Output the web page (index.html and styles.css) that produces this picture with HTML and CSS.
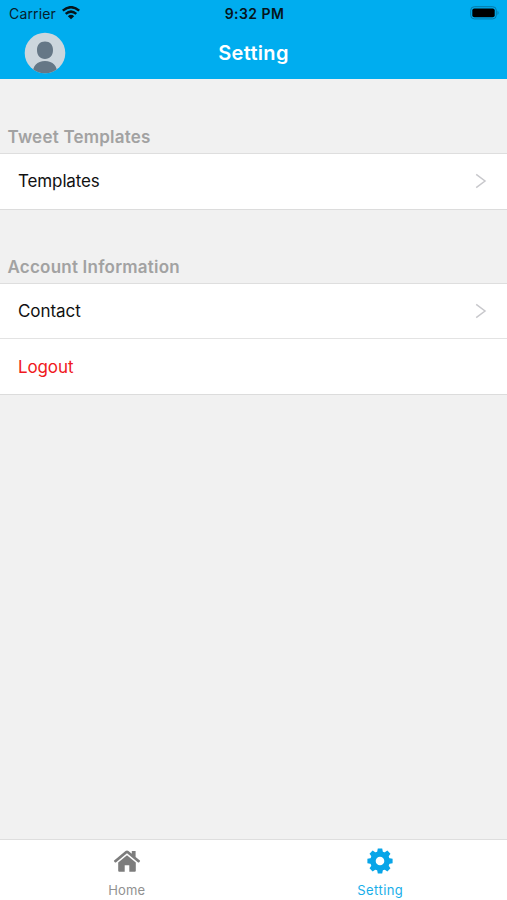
FILE: index.html
```
<!DOCTYPE html>
<html lang="en">
<head>
<meta charset="utf-8">
<title>Setting</title>
<link rel="stylesheet" href="styles.css">
</head>
<body>
<header class="header">
  <div class="status">
    <div class="carrier"><span>Carrier</span>
      <svg class="wifi" width="18" height="14" viewBox="0 0 18 14"><g fill="none" stroke="#06141b" stroke-width="2.5"><path d="M.8 4.6Q9-2.2 17.2 4.6"/><path d="M3.7 7.9Q9 3.4 14.3 7.9"/></g><path d="M5.8 10.2Q9 7.4 12.2 10.2L9 13.3z" fill="#06141b"/></svg>
    </div>
    <time class="time">9:32 PM</time>
    <svg class="battery" width="30" height="14" viewBox="0 0 30 14"><rect x=".7" y=".7" width="25.6" height="12.2" rx="3.6" fill="none" stroke="#0679a8" stroke-width="1"/><rect x="2.3" y="2.4" width="22.4" height="8.8" rx="2" fill="#000"/><path d="M27.5 4.7q2.2 2.1 0 4.2z" fill="#0679a8"/></svg>
  </div>
  <div class="nav">
    <svg class="avatar" width="42" height="42" viewBox="0 0 42 42"><defs><clipPath id="round"><circle cx="21" cy="21" r="20.3"/></clipPath></defs><g clip-path="url(#round)"><path fill="#ccd6dd" d="M0 0h42v42H0z"/><path fill="#657786" d="M21 9.5c5 0 8 3.3 8 8.4 0 5.3-3 9-8 9s-8-3.7-8-9c0-5.1 3-8.4 8-8.4zM8.7 42c0-8 4.3-13 12.3-13s12.3 5 12.3 13z"/></g></svg>
    <h1 class="title">Setting</h1>
  </div>
</header>
<main class="content">
  <h2 class="section-title tweets">Tweet Templates</h2>
  <div class="list">
    <div class="row"><span class="templates">Templates</span><svg class="chevron" width="12" height="16" viewBox="0 0 12 16"><path d="M1.2 1.3L10 8l-8.8 6.7"/></svg></div>
  </div>
  <h2 class="section-title account">Account Information</h2>
  <div class="list">
    <div class="row contact"><span>Contact</span><svg class="chevron" width="12" height="16" viewBox="0 0 12 16"><path d="M1.2 1.3L10 8l-8.8 6.7"/></svg></div>
    <div class="row logout"><span>Logout</span></div>
  </div>
</main>
<nav class="tabs">
  <div class="tab">
    <svg width="28" height="28" viewBox="0 0 28 28" fill="#7d7d7d"><path d="M14 8.2l8.8 7.4v8.2q0 1-1 1h-5.5v-6.6h-4.6v6.6H6.2q-1 0-1-1v-8.2z"/><path d="M14 3.4q.8 0 1.5.6l3.3 2.8V4.1h3.8v5.8l4.3 3.6q.4.4.1.8l-1 1.1q-.4.4-.9 0L14 6.2 2.9 15.4q-.5.4-.9 0l-1-1.1q-.3-.4.1-.8L12.5 4q.7-.6 1.5-.6z"/></svg>
    <span class="home">Home</span>
  </div>
  <div class="tab active">
    <svg width="28" height="28" viewBox="0 0 28 28"><g fill="#08a5e8"><circle cx="14" cy="14" r="9.8"/><path d="M11.8 1.4h4.4l.8 4.3v16.6l-.8 4.3h-4.4l-.8-4.3V5.7z"/><path transform="rotate(45 14 14)" d="M11.8 1.4h4.4l.8 4.3v16.6l-.8 4.3h-4.4l-.8-4.3V5.7z"/><path transform="rotate(90 14 14)" d="M11.8 1.4h4.4l.8 4.3v16.6l-.8 4.3h-4.4l-.8-4.3V5.7z"/><path transform="rotate(135 14 14)" d="M11.8 1.4h4.4l.8 4.3v16.6l-.8 4.3h-4.4l-.8-4.3V5.7z"/></g><circle cx="14" cy="14" r="4.3" fill="#fff"/></svg>
    <span class="setting">Setting</span>
  </div>
</nav>
</body>
</html>
```
FILE: styles.css
```
* { box-sizing: border-box; }
body { margin: 0; height: 900px; display: flex; flex-direction: column; overflow: hidden; background: #f1f1f1; font-family: Inter, "Liberation Sans", sans-serif; color: #111; }
svg { display: block; flex-shrink: 0; }
.header { height: 79px; background: #00adef; flex-shrink: 0; }
.status { height: 27px; display: grid; grid-template-columns: 1fr auto 1fr; align-items: center; padding: 0 7px 0 9px; }
.carrier { display: flex; align-items: center; gap: 6px; font-size: 14px; line-height: 20px; letter-spacing: .15px; color: #06202c; }
.wifi { margin-top: -2px; }
.time { font-size: 14px; font-weight: 600; letter-spacing: .45px; color: #06141b; }
.battery { justify-self: end; margin-top: -1px; }
.nav { height: 51px; display: grid; grid-template-columns: 1fr auto 1fr; align-items: center; padding: 0 24px; }
.title { margin: 0; font-size: 20px; line-height: 26px; font-weight: 600; letter-spacing: .3px; color: #fff; }
.content { flex: 1; }
.section-title { margin: 0; height: 74px; padding: 46px 7.5px 0; font-size: 17px; line-height: 24px; font-weight: 600; letter-spacing: .22px; color: #a2a2a2; }
.account { height: 73px; padding-top: 45px; }
.list { background: #fff; border-top: 1px solid #dedede; border-bottom: 1px solid #dcdcdc; }
.row { height: 55px; display: flex; align-items: center; justify-content: space-between; padding: 0 20px 2px 18px; font-size: 17px; letter-spacing: -.12px; }
.contact { height: 54px; padding-bottom: 0; letter-spacing: -.05px; }
.logout { height: 56px; padding-bottom: 0; border-top: 1px solid #e3e3e3; color: #f01820; }
.chevron { fill: none; stroke: #c8c8cc; stroke-width: 1.5; }
.tabs { height: 61px; display: flex; background: #fff; border-top: 1px solid #dedede; flex-shrink: 0; }
.tab { flex: 1; display: flex; flex-direction: column; align-items: center; padding-top: 7px; font-size: 13px; line-height: 18px; color: #919191; }
.tab span { margin-top: 6px; }
.home { letter-spacing: .2px; }
.setting { letter-spacing: .45px; }
.active { color: #18aee9; }
```
